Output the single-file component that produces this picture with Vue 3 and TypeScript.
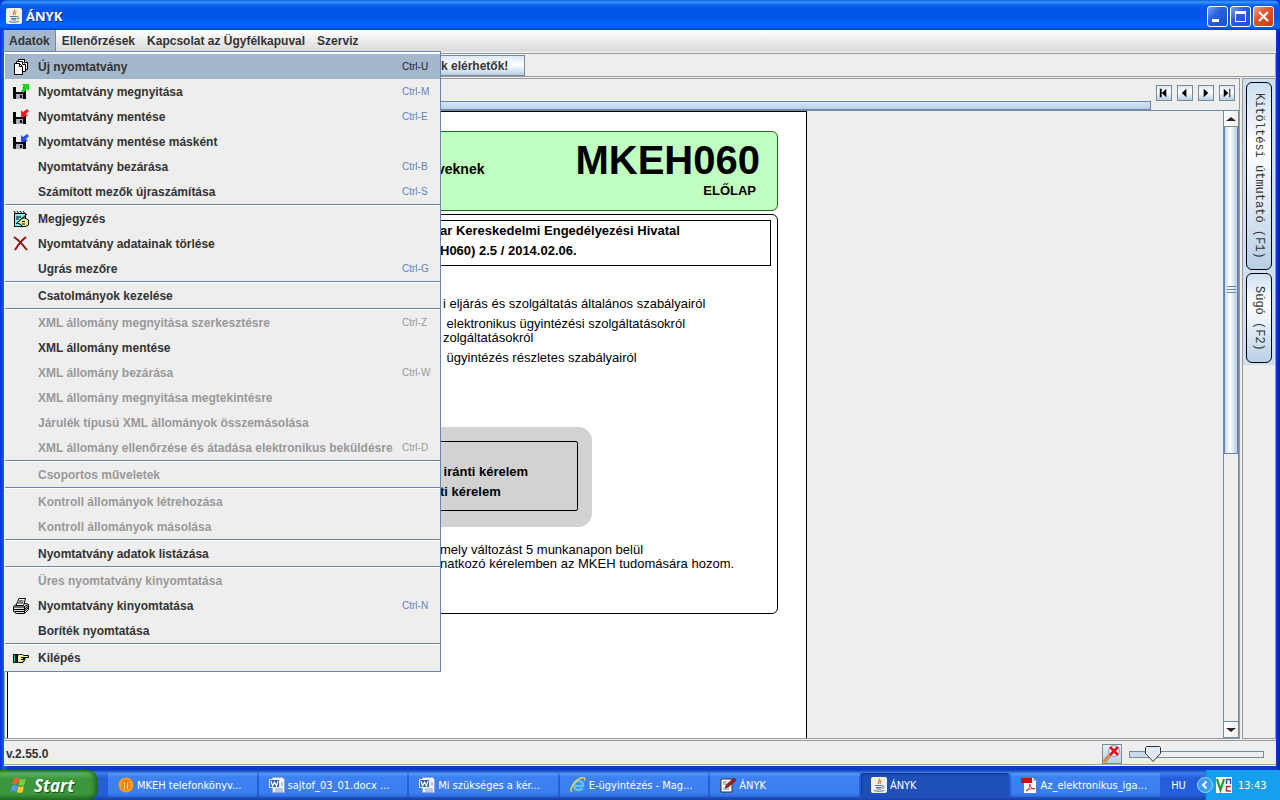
<script setup lang="ts">
import { ref } from 'vue'

interface MenuItem {
  label: string
  icon?: string
  key?: string
  off?: boolean
}

const menus = ['Adatok', 'Ellenőrzések', 'Kapcsolat az Ügyfélkapuval', 'Szerviz']

const groups: MenuItem[][] = [
  [
    { label: 'Új nyomtatvány', icon: 'new', key: 'Ctrl-U' },
    { label: 'Nyomtatvány megnyitása', icon: 'open', key: 'Ctrl-M' },
    { label: 'Nyomtatvány mentése', icon: 'save', key: 'Ctrl-E' },
    { label: 'Nyomtatvány mentése másként', icon: 'saveas' },
    { label: 'Nyomtatvány bezárása', key: 'Ctrl-B' },
    { label: 'Számított mezők újraszámítása', key: 'Ctrl-S' },
  ],
  [
    { label: 'Megjegyzés', icon: 'note' },
    { label: 'Nyomtatvány adatainak törlése', icon: 'delete' },
    { label: 'Ugrás mezőre', key: 'Ctrl-G' },
  ],
  [{ label: 'Csatolmányok kezelése' }],
  [
    { label: 'XML állomány megnyitása szerkesztésre', key: 'Ctrl-Z', off: true },
    { label: 'XML állomány mentése' },
    { label: 'XML állomány bezárása', key: 'Ctrl-W', off: true },
    { label: 'XML állomány megnyitása megtekintésre', off: true },
    { label: 'Járulék típusú XML állományok összemásolása', off: true },
    { label: 'XML állomány ellenőrzése és átadása elektronikus beküldésre', key: 'Ctrl-D', off: true },
  ],
  [{ label: 'Csoportos műveletek', off: true }],
  [
    { label: 'Kontroll állományok létrehozása', off: true },
    { label: 'Kontroll állományok másolása', off: true },
  ],
  [{ label: 'Nyomtatvány adatok listázása' }],
  [
    { label: 'Üres nyomtatvány kinyomtatása', off: true },
    { label: 'Nyomtatvány kinyomtatása', icon: 'print', key: 'Ctrl-N' },
    { label: 'Boríték nyomtatása' },
  ],
  [{ label: 'Kilépés', icon: 'exit' }],
]

const selected = ref('Új nyomtatvány')

const pager = [
  { name: 'Első', d: 'M3 3h2v9H3zM10 3v9L5 7.5z' },
  { name: 'Előző', d: 'M9 3v9L4 7.5z' },
  { name: 'Következő', d: 'M5 3v9l5-4.500z' },
  { name: 'Utolsó', d: 'M4 3v9l5-4.500zM10 3h1v9h-1z' },
]

const tasks = [
  { icon: 'mkeh', label: 'MKEH telefonkönyv...' },
  { icon: 'word', label: 'sajtof_03_01.docx ...' },
  { icon: 'word', label: 'Mi szükséges a kér...' },
  { icon: 'ie', label: 'E-ügyintézés - Mag...' },
  { icon: 'pen', label: 'ÁNYK' },
  { icon: 'java', label: 'ÁNYK', active: true },
  { icon: 'pdf', label: 'Az_elektronikus_iga...' },
]

const zoom = ref(13)
</script>

<template>
  <div class="desktop">
    <div class="window">
      <header class="title">
        <svg class="ic16" viewBox="0 0 16 16">
          <rect width="16" height="16" rx="2" fill="#f2f0ea" />
          <path d="M8.500 1.500c1 2-2.500 3-1 5.500M10.500 3.500C8.500 5 8.500 5.500 9.500 7" fill="none" stroke="#e0762d" stroke-width="1.200" />
          <path d="M4 8.500h7M5 10.500h5.500M5.500 12h4.500M3 13.500c3 1 7 1 10 0M11 9c3-.5 2 2 0 2.500" fill="none" stroke="#4f7396" />
        </svg>
        <h1>ÁNYK</h1>
        <div class="sys">
          <button aria-label="Kis méret"><svg viewBox="0 0 19 19"><path d="M4 12h7v3H4z" fill="#fff" /></svg></button>
          <button aria-label="Teljes méret"><svg viewBox="0 0 19 19"><path d="M4 4h11v11H4zM5 7v7h9V7z" fill="#fff" fill-rule="evenodd" /></svg></button>
          <button class="close" aria-label="Bezárás"><svg viewBox="0 0 19 19"><path d="M5 5l9 9M14 5l-9 9" stroke="#fff" stroke-width="2.200" /></svg></button>
        </div>
      </header>

      <div class="client">
        <nav class="menubar">
          <button v-for="(m, i) in menus" :key="m" :class="{ open: i === 0 }">{{ m }}</button>
          <div class="popup" role="menu">
            <div v-for="(g, gi) in groups" :key="gi" class="group">
              <button
                v-for="it in g"
                :key="it.label"
                role="menuitem"
                class="item"
                :class="{ hot: it.label === selected }"
                :disabled="it.off"
                @mouseenter="selected = it.label"
              >
                <span class="slot">
                  <svg v-if="it.icon === 'new'" viewBox="0 0 16 16">
                    <path d="M5.500 .5h6l3 3v7h-9z" fill="#fff" stroke="#000" />
                    <path d="M3.500 2.500h6l3 3v7h-9z" fill="#fff" stroke="#000" />
                    <path d="M1.500 4.500h5l3 3v8h-8zM6.500 4.500v3h3M9.500 2.500v3h3M11.500 .5v3h3" fill="#fff" stroke="#000" />
                  </svg>
                  <svg v-else-if="it.icon === 'open' || it.icon === 'save' || it.icon === 'saveas'" viewBox="0 0 16 16">
                    <path d="M0 3h13v12H1l-1-1z" fill="#08080c" />
                    <path d="M3 3h7v5H3z" fill="#eee" />
                    <path d="M3 10h7v5H3z" fill="#aaacb8" />
                    <path d="M7 11h2v3H7z" fill="#111" />
                    <path v-if="it.icon === 'open'" d="M9 0h7v7l-2-2-4 4-2-2 3-4z" fill="#14d914" />
                    <path v-else-if="it.icon === 'save'" d="M14 0l2 2-3 3 2 2-7 1V1l2 2z" fill="#ec1c24" />
                    <path v-else d="M14 0l2 2-3 3 2 2-7 1V1l2 2z" fill="#2a52d8" />
                  </svg>
                  <svg v-else-if="it.icon === 'note'" viewBox="0 0 16 16">
                    <path d="M1.500 2.500h11v13h-11z" fill="#7af0f0" stroke="#000" />
                    <path d="M1 0l2 3M4 0l2 3M7 0l2 3M10 0l2 3M3 6h5M3 8h3" stroke="#000" />
                    <path d="M4 12l5-5h3l3.500 2v5l-3 1.500H9l-1-2z" fill="#f3f08b" stroke="#000" />
                    <path d="M3 13L14 3M9 10.500h3M9 13h3" stroke="#000" />
                  </svg>
                  <svg v-else-if="it.icon === 'delete'" viewBox="0 0 16 16">
                    <path d="M1 1c3 2 9 8 13 13M13 1C9 4 5 9 2 14" fill="none" stroke="#8e1018" stroke-width="2" />
                  </svg>
                  <svg v-else-if="it.icon === 'print'" viewBox="0 0 16 16">
                    <path d="M.5 8.500l4-3h8l3 1v5l-4 4h-8l-3-2z" fill="#ddd" stroke="#000" />
                    <path d="M6 .5h6.500l-2 7H3z" fill="#fff" stroke="#000" />
                    <path d="M6 3h4.500M5 5h5" stroke="#000" />
                    <path d="M.5 9h10.500l4-2.500M.5 11.500h10.500l4-3M2 13.500h9l4-3.500M11.500 9v6" fill="none" stroke="#000" />
                  </svg>
                  <svg v-else-if="it.icon === 'exit'" viewBox="0 0 16 16">
                    <path d="M0 4h5v9H0z" fill="#111" />
                    <path d="M1 5h1v7H1z" fill="#2c9" />
                    <path d="M4.500 5l2-.5h3l1 1h5v2H10v1h2v1.500h-1v1.500h-1v1H6l-1.500-1z" fill="#f4f08a" stroke="#000" />
                    <path d="M8 7.500h2M8 9.500h3" stroke="#000" />
                  </svg>
                </span>
                <span class="label">{{ it.label }}</span>
                <kbd v-if="it.key">{{ it.key }}</kbd>
              </button>
            </div>
          </div>
        </nav>

        <div class="toolbar">
          <button class="notice">k elérhetők!</button>
        </div>

        <div class="main">
          <section class="left">
            <div class="pager">
              <button v-for="p in pager" :key="p.name" :aria-label="p.name">
                <svg viewBox="0 0 15 15"><path :d="p.d" fill="#000" /></svg>
              </button>
            </div>
            <div class="strip"></div>
            <div class="view">
              <article class="paper">
                <header class="green">
                  <strong class="who">veknek</strong>
                  <div class="code">
                    <h2>MKEH060</h2>
                    <strong>ELŐLAP</strong>
                  </div>
                </header>
                <div class="frame">
                  <div class="office">
                    <p>ar Kereskedelmi Engedélyezési Hivatal</p>
                    <p>H060) 2.5 / 2014.02.06.</p>
                  </div>
                  <div class="laws">
                    <p>i eljárás és szolgáltatás általános szabályairól</p>
                    <p>{{ ' elektronikus ügyintézési szolgáltatásokról\nzolgáltatásokról' }}</p>
                    <p>{{ ' ügyintézés részletes szabályairól' }}</p>
                  </div>
                  <div class="grey">
                    <div class="kinds">
                      <p>{{ ' iránti kérelem' }}</p>
                      <p>ti kérelem</p>
                    </div>
                  </div>
                  <p class="decl">{{ 'mely változást 5 munkanapon belül\nnatkozó kérelemben az MKEH tudomására hozom.' }}</p>
                </div>
              </article>
              <div class="scroll">
                <button aria-label="Fel"><svg viewBox="0 0 14 14"><path d="M2 9h10L7 5z" fill="#322" /></svg></button>
                <div class="track"><div class="thumb"><i></i><i></i><i></i></div></div>
                <button aria-label="Le"><svg viewBox="0 0 14 14"><path d="M2 5h10L7 9z" fill="#322" /></svg></button>
              </div>
            </div>
          </section>
          <aside class="side">
            <div class="sidetabs">
              <button class="guide">Kitöltési útmutató (F1)</button>
              <button class="help">Súgó (F2)</button>
            </div>
          </aside>
        </div>

        <footer class="status">
          <span>v.2.55.0</span>
          <button class="mag" aria-label="Nagyítás ki">
            <svg viewBox="0 0 18 18">
              <circle cx="11" cy="6" r="5.500" fill="#e9f3f8" stroke="#999" />
              <path d="M1 17l6-7" stroke="#d08c5a" stroke-width="4" />
              <path d="M7 2l8 8M15 2l-8 8" stroke="#e0101c" stroke-width="2.500" />
            </svg>
          </button>
          <input v-model="zoom" type="range" min="0" max="100" aria-label="Nagyítás" />
        </footer>
      </div>
    </div>

    <footer class="taskbar">
      <button class="start">
        <svg viewBox="0 0 20 18">
          <path d="M4 2c2-1.500 4-1 5.500 0L8 8.500C6 7.500 4.500 7.500 2.500 8.500z" fill="#f0622d" />
          <path d="M10.500 2.500c2 1 4 1 6 0L15 9c-2 1-4 1-6 0z" fill="#7fcf3f" />
          <path d="M2 9.800c2-1.300 4-1 5.700 0L6.200 16c-2-1-4-1-5.700 0z" fill="#5a96f4" />
          <path d="M8.700 10.300c2 1 4 1 6 0L13.200 16.500c-2 1-4 1-6 0z" fill="#fbc832" />
        </svg>
        Start
      </button>
      <div class="tasks">
        <button v-for="(t, i) in tasks" :key="i" :class="{ active: t.active }">
          <svg class="ic16" viewBox="0 0 16 16">
            <template v-if="t.icon === 'mkeh'">
              <circle cx="8" cy="8" r="7.500" fill="#f79a1c" />
              <path d="M5 12V6M8 13V3M11 12V6M4 5c1.500-2 2.500-2 4 0 1.500-2 2.500-2 4 0" fill="none" stroke="#e0640b" />
              <path d="M6.500 12V6M9.500 12V6" stroke="#ffe28a" />
            </template>
            <template v-else-if="t.icon === 'word'">
              <path d="M3.500 .5h10l2 2v13h-12z" fill="#f4f8ff" stroke="#8fa6cf" />
              <path d="M12 6h2M12 8h2M6 12h8M6 14h8" stroke="#7d9bd0" />
              <rect y="2" width="11" height="9" fill="#e8effa" />
              <rect x="1" y="3" width="9" height="7" fill="#3561ae" />
              <path d="M2 4l1.500 5L5.500 5l2 4L9 4" fill="none" stroke="#fff" stroke-width="1.200" />
            </template>
            <template v-else-if="t.icon === 'ie'">
              <path d="M4.500 9H13c0-3-1.500-5-4.500-5S4 6 4 8.800 6 13 8.500 13c2 0 3.300-.8 4-2" fill="none" stroke="#62c3f3" stroke-width="2.600" />
              <path d="M2 15C-1 13 4 4 10 1.500c4-2 5-1 4.500 2" fill="none" stroke="#f2d23c" stroke-width="1.500" />
            </template>
            <template v-else-if="t.icon === 'pen'">
              <path d="M1 2h11v13H1z" fill="#fff" stroke="#333" />
              <path d="M3 5h4M3 7h3M3 12h6" stroke="#777" />
              <path d="M5 11l1.500-3.500L14 1l2 2-7.500 7z" fill="#a8201c" stroke="#400" stroke-width=".6" />
            </template>
            <template v-else-if="t.icon === 'java'">
              <rect width="16" height="16" rx="2" fill="#f2f0ea" />
              <path d="M8.500 1.500c1 2-2.500 3-1 5.500M10.500 3.500C8.500 5 8.500 5.500 9.500 7" fill="none" stroke="#e0762d" stroke-width="1.200" />
              <path d="M4 8.500h7M5 10.500h5.500M5.500 12h4.500M3 13.500c3 1 7 1 10 0M11 9c3-.5 2 2 0 2.500" fill="none" stroke="#4f7396" />
            </template>
            <template v-else>
              <path d="M3 1h9l3 3v12H3z" fill="#fff" />
              <path d="M12 1v3h3z" fill="#bbb" />
              <rect y="1" width="11" height="5" fill="#c4111b" />
              <path d="M5 14c2-1 4-4 4-7 0 3 2 5 5 5-3-1-6 0-9 2z" fill="none" stroke="#d8323a" />
            </template>
          </svg>
          <span>{{ t.label }}</span>
        </button>
      </div>
      <button class="lang">HU</button>
      <div class="tray">
        <button class="chev" aria-label="Rejtett ikonok">
          <svg viewBox="0 0 16 16"><circle cx="8" cy="8" r="7.500" fill="#3d9cf0" stroke="#9cd4fb" /><path d="M9.500 4.500L6 8l3.500 3.500" fill="none" stroke="#fff" stroke-width="2" /></svg>
        </button>
        <svg class="ic16" viewBox="0 0 16 16">
          <rect width="16" height="16" fill="#fff" />
          <path d="M1 2l3.500 11L8 2" fill="none" stroke="#1b9a2c" stroke-width="2.200" />
          <path d="M10.500 7V2.500h4V7" fill="none" stroke="#2d48c0" stroke-width="1.500" />
          <path d="M15 9.500h-4.500v4.500H15" fill="none" stroke="#d8232a" stroke-width="1.500" />
        </svg>
        <time>13:43</time>
      </div>
    </footer>
  </div>
</template>

<style>
html,
body {
  background: #eee;
  overflow: hidden;
}
</style>

<style scoped>
* {
  box-sizing: border-box;
}
button {
  margin: 0;
  padding: 0;
  border: 0;
  background: none;
  font: inherit;
  color: inherit;
}
h1,
h2,
p {
  margin: 0;
}
svg {
  display: block;
}
.ic16 {
  width: 16px;
  height: 16px;
  flex: none;
}
.desktop {
  height: 100vh;
  display: flex;
  flex-direction: column;
  font: bold 12px 'Liberation Sans', Arial, sans-serif;
  color: #333;
  background: #0a3bd0;
}
.window {
  flex: 1;
  min-height: 0;
  display: flex;
  flex-direction: column;
  border-radius: 8px 8px 0 0;
  overflow: hidden;
  background: linear-gradient(90deg, #0831d9, #1660e8 4px, #0a3bd0 8px, #0a3bd0 calc(100% - 4px), #0020a0);
}
.title {
  flex: none;
  height: 30px;
  display: flex;
  align-items: center;
  gap: 4px;
  padding: 2px 6px 0;
  background: linear-gradient(#0a5ae0, #3c96ff 2px, #0a62ee 5px, #0055e5 10px, #0058ea 18px, #0266ff 25px, #0062f8 27px, #0040c8);
}
.title h1 {
  flex: 1;
  font: bold 13px 'Open Sans', sans-serif;
  color: #fff;
  text-shadow: 1px 1px #0a2a80;
}
.sys {
  display: flex;
  gap: 2px;
}
.sys button {
  width: 21px;
  height: 21px;
  border: 1px solid #fff;
  border-radius: 3px;
  background: linear-gradient(135deg, #7ba4f4, #2a5fe0 40%, #1c50d8);
}
.sys .close {
  background: linear-gradient(135deg, #f0a088, #e0552c 40%, #c83c14);
}
.client {
  flex: 1;
  min-height: 0;
  display: flex;
  flex-direction: column;
  margin: 0 4px 4px;
  border-bottom: 1px solid #fff;
  background: #eee;
}
.menubar {
  position: relative;
  z-index: 2;
  flex: none;
  height: 23px;
  display: flex;
  background: linear-gradient(#fff, #dadada 21px, #eee 22px);
}
.menubar > button {
  height: 21px;
  padding: 0 6px;
}
.menubar > .open {
  padding: 0 5px;
  background: #a3b8cc;
  border-right: 1px solid #7a8a99;
}
.popup {
  position: absolute;
  left: 0;
  top: 21px;
  width: 437px;
  padding: 2px 0 1px;
  border: 1px solid #6b84b0;
  border-left-color: #fff;
  background: #eee;
  box-shadow: inset 0 2px #fff;
}
.group + .group {
  border-top: 1px solid #6b84b0;
  box-shadow: inset 0 1px #fff;
  padding-top: 1px;
}
.item {
  width: 100%;
  height: 25px;
  display: flex;
  align-items: center;
  text-align: left;
}
.item:disabled {
  color: #999;
}
.item.hot {
  background: #a3b8cc;
}
.slot {
  width: 33px;
  padding-left: 8px;
}
.slot svg {
  width: 16px;
  height: 16px;
}
.label {
  flex: 1;
  white-space: nowrap;
}
kbd {
  width: 38px;
  font: 10px 'Liberation Sans', Arial, sans-serif;
  color: #6382bf;
}
.hot kbd {
  color: #222;
}
.item:disabled kbd {
  color: #999;
}
.toolbar {
  flex: none;
  height: 24px;
  border: 1px solid #999;
  padding-top: 1px;
}
.notice {
  height: 21px;
  padding: 0 16px 0 435px;
  border: 1px solid #7a8a99;
  background: linear-gradient(#dde8f3, #fff 9px, #b8cfe5);
}
.main {
  flex: 1;
  min-height: 0;
  display: flex;
  gap: 2px;
  margin-top: 1px;
}
.left {
  flex: 1;
  min-width: 0;
  display: flex;
  flex-direction: column;
  border: 1px solid #999;
}
.pager {
  height: 22px;
  display: flex;
  justify-content: flex-end;
  gap: 5px;
  padding: 6px 4px 0 0;
}
.pager button {
  width: 16px;
  height: 16px;
  border: 1px solid #7a8a99;
  background: linear-gradient(#dde8f3, #fff 6px, #b8cfe5);
}
.strip {
  flex: none;
  height: 9px;
  margin-right: 88px;
  border: 1px solid #6b84b0;
  background: linear-gradient(#d8e6f6, #b8cfe5);
}
.view {
  flex: 1;
  min-height: 0;
  display: flex;
  justify-content: space-between;
  border-top: 1px solid #7a8a99;
  padding-left: 2px;
  overflow: hidden;
}
.paper {
  width: 800px;
  padding: 19px 28px 0;
  border: 1px solid #000;
  border-bottom: 0;
  background: #fff;
  color: #000;
  font-size: 13px;
  white-space: pre;
}
.green {
  height: 80px;
  display: flex;
  align-items: center;
  justify-content: space-between;
  padding: 0 17px 4px 400px;
  border: 1px solid #18701c;
  border-radius: 6px;
  background: #c0ffc0;
}
.who {
  font-size: 14px;
}
.code {
  display: flex;
  flex-direction: column;
  align-items: flex-end;
}
.code strong {
  padding-right: 4px;
  line-height: 18px;
}
.green h2 {
  font-size: 40px;
  line-height: 44px;
}
.frame {
  height: 400px;
  margin-top: 3px;
  padding: 5px 6px;
  border: 1px solid #000;
  border-radius: 6px;
}
.office {
  height: 46px;
  padding-left: 396px;
  border: 1px solid #000;
  line-height: 20px;
}
.laws {
  display: flex;
  flex-direction: column;
  gap: 6px;
  margin-top: 31px;
  padding-left: 400px;
  font-weight: normal;
  line-height: 14px;
}
.grey {
  width: 549px;
  height: 100px;
  margin-top: 62px;
  padding: 14px;
  border-radius: 14px;
  background: #d2d2d2;
}
.kinds {
  height: 70px;
  padding: 20px 0 0 382px;
  border: 1px solid #000;
  border-radius: 2px;
  line-height: 20px;
}
.decl {
  margin-top: 16px;
  padding-left: 397px;
  font-weight: normal;
  line-height: 14px;
}
.scroll {
  width: 16px;
  display: flex;
  flex-direction: column;
  border: 1px solid #7a8a99;
  border-top: 0;
}
.scroll button {
  height: 15px;
  background: linear-gradient(90deg, #fff, #eee);
}
.scroll svg {
  width: 14px;
  height: 14px;
}
.track {
  flex: 1;
  border: solid #7a8a99;
  border-width: 1px 0;
}
.thumb {
  height: 55%;
  display: flex;
  flex-direction: column;
  align-items: center;
  justify-content: center;
  gap: 2px;
  border: 1px solid #6382bf;
  border-top: 0;
  background: linear-gradient(90deg, #c8ddf2, #fff 5px, #b8cfe5);
}
.thumb i {
  width: 9px;
  height: 1px;
  background: #6382bf;
}
.side {
  width: 34px;
  border: 1px solid #999;
}
.sidetabs {
  display: flex;
  flex-direction: column;
  gap: 3px;
  padding: 3px 3px 2px;
  background: #cddff0;
}
.sidetabs button {
  width: 26px;
  writing-mode: vertical-rl;
  border: 1px solid #000;
  border-radius: 6px;
  background: linear-gradient(#cfe0f2, #fff 35%, #b8cfe5);
  font: 12px 'Liberation Mono', monospace;
  white-space: nowrap;
}
.sidetabs .guide {
  height: 188px;
}
.sidetabs .help {
  height: 90px;
}
.status {
  flex: none;
  height: 25px;
  display: flex;
  align-items: center;
  margin-top: 1px;
  padding: 3px 12px 0 2px;
  border-top: 1px solid #999;
  border-bottom: 1px solid #8fb0a0;
}
.status span {
  flex: 1;
}
.mag {
  width: 20px;
  height: 20px;
  margin-right: 7px;
  border: 1px solid #7a8a99;
  background: linear-gradient(#e8f0f8, #b8cfe5);
}
.status input {
  appearance: none;
  width: 135px;
  height: 16px;
  margin: 0;
  background: none;
}
.status input::-webkit-slider-runnable-track {
  height: 7px;
  border: 1px solid #7a8a99;
  background: linear-gradient(90deg, #c8daec 16px, #eee 16px);
}
.status input::-webkit-slider-thumb {
  appearance: none;
  width: 16px;
  height: 16px;
  margin-top: -6px;
  background: url("data:image/svg+xml,%3Csvg xmlns='http://www.w3.org/2000/svg' viewBox='0 0 16 16'%3E%3Cpath d='M1.500 .5h13l1 1v6l-7.500 8-7.500-8v-6z' fill='%23dfeaf6' stroke='%23333'/%3E%3C/svg%3E");
}
.taskbar {
  flex: none;
  height: 30px;
  display: flex;
  font: 11px 'DejaVu Sans Condensed', 'DejaVu Sans', sans-serif;
  color: #fff;
  background: linear-gradient(#1941a5, #3a80f0 3px, #245edb 8px, #245edb 25px, #1941a5);
}
.start {
  width: 98px;
  display: flex;
  align-items: center;
  gap: 5px;
  padding-left: 10px;
  margin-right: 10px;
  border-radius: 0 10px 10px 0;
  background: linear-gradient(#2c7a2c, #5cb45c 3px, #3c963c 9px, #3c963c 24px, #226e22);
  box-shadow: inset -3px 0 4px #1e641e;
  font: italic bold 17px 'Open Sans', sans-serif;
  text-shadow: 1px 1px 1px #1d4a1d;
}
.start svg {
  width: 19px;
  height: 18px;
}
.tasks {
  flex: 1;
  min-width: 0;
  display: flex;
  gap: 2px;
  padding-top: 3px;
}
.tasks button {
  flex: 1;
  min-width: 0;
  height: 24px;
  display: flex;
  align-items: center;
  gap: 3px;
  padding-left: 10px;
  border-radius: 2px;
  background: linear-gradient(#5a9af8, #3c81f3 4px, #3c7ef0 20px, #2e68d8);
  white-space: nowrap;
  overflow: hidden;
}
.tasks .active {
  background: #1e50b8;
  box-shadow: inset 1px 1px 2px #0e328c;
}
.lang {
  width: 37px;
}
.tray {
  width: 83px;
  display: flex;
  align-items: center;
  gap: 3px;
  background: linear-gradient(90deg, transparent 8px, #0c78d8 8px, transparent 10px), linear-gradient(90deg, transparent 9px, #14a0ee 9px);
}
.chev {
  width: 16px;
  height: 16px;
}
.tray time {
  padding-left: 3px;
}
</style>
